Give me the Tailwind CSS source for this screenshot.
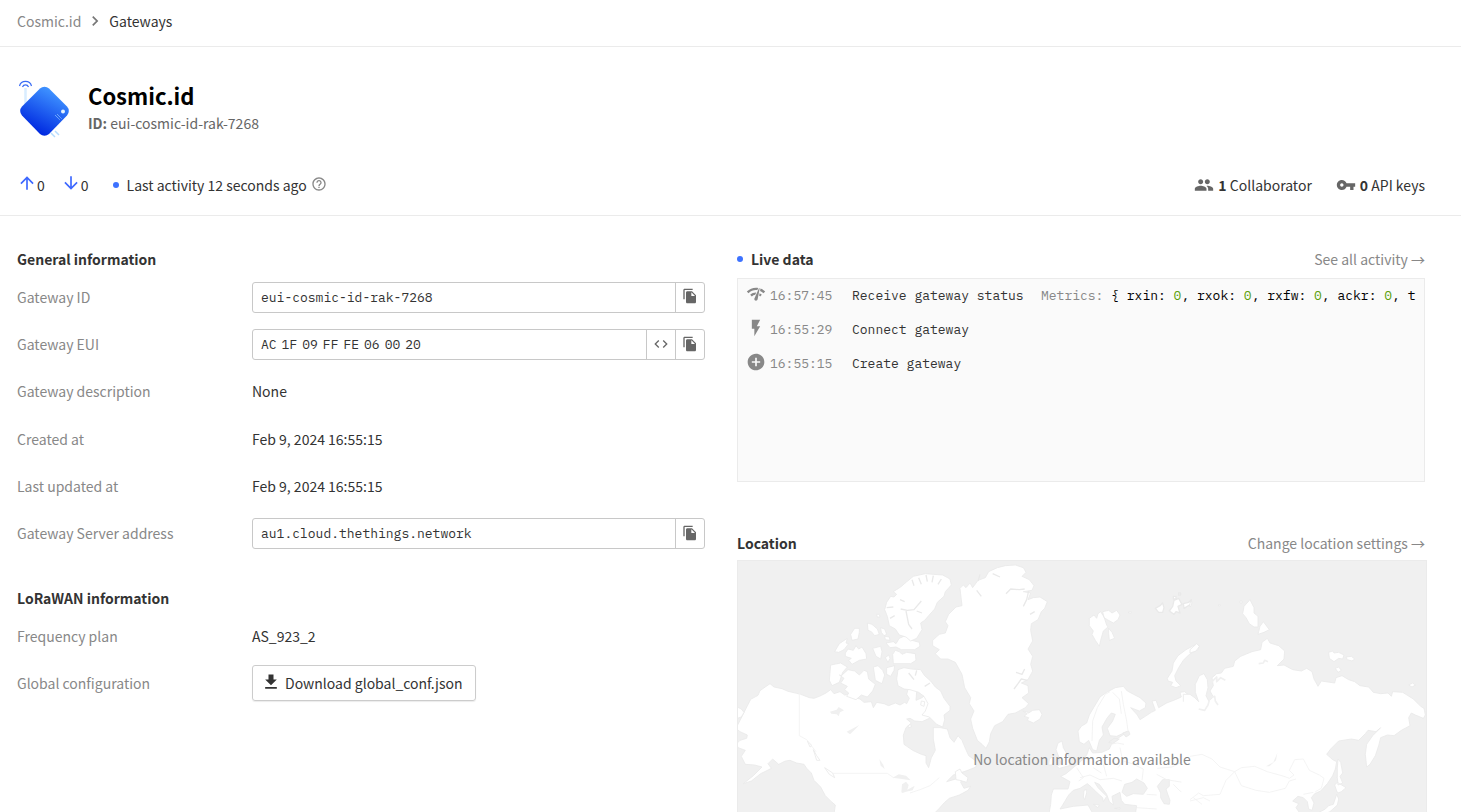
<!DOCTYPE html>
<html lang="en">
<head>
<meta charset="utf-8">
<meta name="viewport" content="width=device-width, initial-scale=1">
<title>Cosmic.id - Gateways</title>
<script src="https://cdn.jsdelivr.net/npm/@tailwindcss/browser@4"></script>
</head>
<body class="min-h-screen bg-white font-['Source_Sans_Pro','Noto_Sans_CJK_SC',sans-serif] text-[14px] leading-6 text-[#333]">

<!-- Icon set -->
<svg class="hidden" aria-hidden="true">
  <symbol id="chevron" viewBox="0 0 24 24"><path d="M10 6L8.59 7.41 13.17 12l-4.58 4.59L10 18l6-6z"/></symbol>
  <symbol id="up" viewBox="0 0 24 24"><path d="M4 12l1.41 1.41L11 7.83V20h2V7.83l5.58 5.59L20 12l-8-8-8 8z"/></symbol>
  <symbol id="down" viewBox="0 0 24 24"><path d="M20 12l-1.41-1.41L13 16.17V4h-2v12.17l-5.58-5.59L4 12l8 8 8-8z"/></symbol>
  <symbol id="help" viewBox="0 0 24 24"><path d="M11 18h2v-2h-2v2zm1-16C6.48 2 2 6.48 2 12s4.48 10 10 10 10-4.48 10-10S17.52 2 12 2zm0 18c-4.41 0-8-3.59-8-8s3.59-8 8-8 8 3.59 8 8-3.59 8-8 8zm0-14c-2.21 0-4 1.79-4 4h2c0-1.1.9-2 2-2s2 .9 2 2c0 2-3 1.75-3 5h2c0-2.25 3-2.5 3-5 0-2.21-1.79-4-4-4z"/></symbol>
  <symbol id="people" viewBox="0 0 24 24"><path d="M16 11c1.66 0 2.99-1.34 2.99-3S17.66 5 16 5c-1.66 0-3 1.34-3 3s1.34 3 3 3zm-8 0c1.66 0 2.99-1.34 2.99-3S9.66 5 8 5C6.34 5 5 6.34 5 8s1.34 3 3 3zm0 2c-2.33 0-7 1.17-7 3.5V19h14v-2.5c0-2.33-4.67-3.5-7-3.5zm8 0c-.29 0-.62.02-.97.05 1.16.84 1.97 1.97 1.97 3.45V19h6v-2.5c0-2.33-4.67-3.5-7-3.5z"/></symbol>
  <symbol id="key" viewBox="0 0 24 24"><path d="M12.65 10C11.83 7.67 9.61 6 7 6c-3.31 0-6 2.69-6 6s2.69 6 6 6c2.61 0 4.83-1.67 5.65-4H17v4h4v-4h2v-4H12.65zM7 14c-1.1 0-2-.9-2-2s.9-2 2-2 2 .9 2 2-.9 2-2 2z"/></symbol>
  <symbol id="copy" viewBox="0 0 24 24"><path d="M16 1H4c-1.1 0-2 .9-2 2v14h2V3h12V1zm-1 4l6 6v10c0 1.1-.9 2-2 2H7.99C6.89 23 6 22.1 6 21l.01-14c0-1.1.89-2 1.99-2h7zm-1 7h5.5L14 6.5V12z"/></symbol>
  <symbol id="code" viewBox="0 0 24 24"><path d="M9.4 16.6L4.8 12l4.6-4.6L8 6l-6 6 6 6 1.4-1.4zm5.2 0l4.6-4.6-4.6-4.6L16 6l6 6-6 6-1.4-1.4z"/></symbol>
  <symbol id="network" viewBox="0 0 24 24"><path d="M15.9 5c-.17 0-.32.09-.41.23l-.07.15-5.18 11.65c-.16.29-.26.61-.26.96 0 1.11.9 2.01 2.01 2.01.96 0 1.77-.68 1.96-1.59l.01-.03L16.4 5.5c0-.28-.22-.5-.5-.5zM1 9l2 2c2.88-2.88 6.79-4.08 10.53-3.62l1.19-2.68C9.89 3.84 4.74 5.27 1 9zm20 2l2-2c-1.64-1.64-3.55-2.82-5.59-3.57l-.53 2.82c1.5.62 2.9 1.53 4.12 2.75zm-4 4l2-2c-.8-.8-1.7-1.42-2.66-1.89l-.55 2.92c.42.27.83.59 1.21.97zM5 13l2 2c1.13-1.13 2.56-1.79 4.03-2l1.28-2.88c-2.63-.08-5.3.87-7.31 2.88z"/></symbol>
  <symbol id="bolt" viewBox="0 0 24 24"><path d="M7 2v11h3v9l7-12h-4l4-8z"/></symbol>
  <symbol id="add" viewBox="0 0 24 24"><path d="M12 2C6.48 2 2 6.48 2 12s4.48 10 10 10 10-4.48 10-10S17.52 2 12 2zm5 11h-4v4h-2v-4H7v-2h4V7h2v4h4v2z"/></symbol>
  <symbol id="download" viewBox="0 0 24 24"><path d="M19 9h-4V3H9v6H5l7 7 7-7zM5 18v2h14v-2H5z"/></symbol>
</svg>

<nav aria-label="Breadcrumb" class="flex h-[47px] items-center border-b border-[#ebebeb] pb-1 pl-[17px]">
  <a href="#" class="text-[#888]">Cosmic.id</a>
  <svg class="ml-1 mr-1 size-5 fill-[#777]"><use href="#chevron"/></svg>
  <a href="#" class="text-[#333]">Gateways</a>
</nav>

<header class="border-b border-[#ebebeb] pl-[17px] pr-9 pt-8">
  <div class="flex gap-[18px]">
    <svg class="h-[60px] w-[53px]" viewBox="0 0 53 60" fill="none">
      <defs><linearGradient id="gw" x1="0.2" y1="0" x2="0.8" y2="1" gradientTransform="rotate(-35 .5 .5)"><stop stop-color="#3d90ff"/><stop offset="1" stop-color="#0029e0"/></linearGradient></defs>
      <path d="M8.500 9v16" stroke="#d9edff" stroke-width="2.500"/>
      <path d="M2.500 7a6.200 6.200 0 0 1 12 0M5.500 8a3.200 3.200 0 0 1 6 0" stroke="#3a6cf5" stroke-width="1.200"/>
      <path d="M34 54l4 4M38 52l4 4" stroke="#b5dcff" stroke-width="1.500"/>
      <path d="M23 9.500a6.500 6.500 0 0 1 9 0L50 27.500a6.500 6.500 0 0 1 0 9L32 55a6.500 6.500 0 0 1-9 0L5 36.500a6.500 6.500 0 0 1 0-9z" fill="url(#gw2)"/>
      <defs><linearGradient id="gw2" x1="38" y1="14" x2="18" y2="52" gradientUnits="userSpaceOnUse"><stop stop-color="#3d90ff"/><stop offset="1" stop-color="#0029e0"/></linearGradient></defs>
      <circle cx="46" cy="32.500" r="2" fill="#e4f3ff"/>
      <path d="M38 36l5 5M40 35l5 5" stroke="#8cc4ff" stroke-width="1" stroke-dasharray="1 .6"/>
    </svg>
    <div>
      <h1 class="pt-0.5 text-[22px] font-bold leading-7 text-black">Cosmic.id</h1>
      <p class="pt-0.5 text-[#666]"><b>ID:</b> eui-cosmic-id-rak-7268</p>
    </div>
  </div>
  <div class="flex items-center justify-between pb-[18px] pt-[34px]">
    <div class="flex items-center">
      <svg class="mb-1 size-5 fill-[#3d68ff]"><use href="#up"/></svg><span>0</span>
      <svg class="mb-1 ml-4 size-5 fill-[#3d68ff]"><use href="#down"/></svg><span>0</span>
      <span class="ml-6 mr-2 size-[6px] rounded-full bg-[#3d72ff]"></span>
      <span>Last activity 12 seconds ago</span>
      <svg class="mb-0.5 ml-1 size-4 fill-[#888]"><use href="#help"/></svg>
    </div>
    <div class="flex items-center gap-6">
      <a href="#" class="flex items-center gap-1"><svg class="size-5 fill-[#666]"><use href="#people"/></svg><span><b>1</b> Collaborator</span></a>
      <a href="#" class="flex items-center gap-1"><svg class="size-5 fill-[#666]"><use href="#key"/></svg><span><b>0</b> API keys</span></a>
    </div>
  </div>
</header>

<main class="grid grid-cols-2 gap-8 pl-[17px] pr-9 pt-[31px]">
  <div>
    <section>
      <h2 class="mb-[3px] font-bold">General information</h2>
      <dl>
        <div class="flex h-[47px] items-center">
          <dt class="w-[235px] shrink-0 pb-0.5 text-[#888]">Gateway ID</dt>
          <dd class="flex h-[31px] flex-1 rounded-[3px] border border-[#c8c8c8]">
            <span class="flex flex-1 items-center pl-2 font-['IBM_Plex_Mono','Liberation_Mono',monospace] text-[13px]">eui-cosmic-id-rak-7268</span>
            <button aria-label="Copy" class="flex w-[29px] justify-center border-l border-[#c8c8c8] pt-[5px]"><svg class="size-4 fill-[#666]"><use href="#copy"/></svg></button>
          </dd>
        </div>
        <div class="flex h-[47px] items-center">
          <dt class="w-[235px] shrink-0 pb-0.5 text-[#888]">Gateway EUI</dt>
          <dd class="flex h-[31px] flex-1 rounded-[3px] border border-[#c8c8c8]">
            <span class="flex flex-1 items-center gap-[5px] pl-2 font-['IBM_Plex_Mono','Liberation_Mono',monospace] text-[13px]"><span>AC</span> <span>1F</span> <span>09</span> <span>FF</span> <span>FE</span> <span>06</span> <span>00</span> <span>20</span></span>
            <button aria-label="Toggle format" class="flex w-[29px] justify-center border-l border-[#c8c8c8] pt-[6px]"><svg class="size-4 fill-[#666]"><use href="#code"/></svg></button>
            <button aria-label="Copy" class="flex w-[29px] justify-center border-l border-[#c8c8c8] pt-[6px]"><svg class="size-4 fill-[#666]"><use href="#copy"/></svg></button>
          </dd>
        </div>
        <div class="flex h-12 items-center pb-0.5"><dt class="w-[235px] text-[#888]">Gateway description</dt><dd>None</dd></div>
        <div class="flex h-[47px] items-center pb-0.5"><dt class="w-[235px] text-[#888]">Created at</dt><dd>Feb 9, 2024 16:55:15</dd></div>
        <div class="flex h-[47px] items-center pb-0.5"><dt class="w-[235px] text-[#888]">Last updated at</dt><dd>Feb 9, 2024 16:55:15</dd></div>
        <div class="flex h-[47px] items-center">
          <dt class="w-[235px] shrink-0 pb-0.5 text-[#888]">Gateway Server address</dt>
          <dd class="flex h-[31px] flex-1 rounded-[3px] border border-[#c8c8c8]">
            <span class="flex flex-1 items-center pl-2 font-['IBM_Plex_Mono','Liberation_Mono',monospace] text-[13px]">au1.cloud.thethings.network</span>
            <button aria-label="Copy" class="flex w-[29px] justify-center border-l border-[#c8c8c8] pt-[6px]"><svg class="size-4 fill-[#666]"><use href="#copy"/></svg></button>
          </dd>
        </div>
      </dl>
    </section>
    <section class="mt-[29px]">
      <h2 class="mb-[3px] font-bold">LoRaWAN information</h2>
      <dl>
        <div class="flex h-[47px] items-center pb-0.5"><dt class="w-[235px] text-[#888]">Frequency plan</dt><dd>AS_923_2</dd></div>
        <div class="flex h-[47px] items-center pb-0.5"><dt class="w-[235px] text-[#888]">Global configuration</dt>
          <dd><button class="flex h-9 items-center gap-1 rounded-[3px] border border-[#ccc] pl-2 pr-3 shadow-[0_1px_1px_rgba(0,0,0,0.08)]"><svg class="mb-0.5 size-5 fill-[#333]"><use href="#download"/></svg>Download global_conf.json</button></dd>
        </div>
      </dl>
    </section>
  </div>

  <div class="min-w-0">
    <section>
      <div class="flex items-center justify-between">
        <h2 class="flex items-center gap-2 font-bold"><span class="size-[6px] rounded-full bg-[#3d72ff]"></span>Live data</h2>
        <a href="#" class="text-[#888]">See all activity →</a>
      </div>
      <ol class="mt-[7px] h-[204px] overflow-hidden border border-[#ebebeb] bg-[#fafafa] pl-2 font-['IBM_Plex_Mono','Liberation_Mono',monospace] text-[13px]">
        <li class="flex h-[34px] items-center whitespace-pre">
          <svg class="mb-1 mr-1 size-5 shrink-0 fill-[#888]"><use href="#network"/></svg>
          <time class="w-[82px] shrink-0 text-[#888]">16:57:45</time>
          <span class="w-[189px] shrink-0">Receive gateway status</span>
          <span class="text-black"><span class="text-[#888]">Metrics:</span> { rxin: <span class="text-[#5ba00b]">0</span>, rxok: <span class="text-[#5ba00b]">0</span>, rxfw: <span class="text-[#5ba00b]">0</span>, ackr: <span class="text-[#5ba00b]">0</span>, t</span>
        </li>
        <li class="flex h-[34px] items-center">
          <svg class="mb-1 mr-1 size-5 shrink-0 fill-[#888]"><use href="#bolt"/></svg>
          <time class="w-[82px] shrink-0 text-[#888]">16:55:29</time>
          <span>Connect gateway</span>
        </li>
        <li class="flex h-[34px] items-center">
          <svg class="mb-1 mr-1 size-5 shrink-0 fill-[#888]"><use href="#add"/></svg>
          <time class="w-[82px] shrink-0 text-[#888]">16:55:15</time>
          <span>Create gateway</span>
        </li>
      </ol>
    </section>

    <section class="mt-[49px]">
      <div class="flex items-center justify-between">
        <h2 class="font-bold">Location</h2>
        <a href="#" class="text-[#888]">Change location settings →</a>
      </div>
      <div class="-mr-0.5 mt-[5px] grid h-[396px] place-items-center overflow-hidden border border-[#ebebeb] bg-[#f0f0f0]">
        <svg class="col-start-1 row-start-1 h-[396px] w-full" viewBox="0 0 2070 1188" preserveAspectRatio="xMidYMin slice" fill="#fff" stroke="#e9e9e9" stroke-width="2.500" stroke-linejoin="round" aria-hidden="true">
          <!-- North America and the Arctic archipelago -->
          <g transform="translate(-21 -90)">
            <path d="M62 505l22-12 6-14 30-21 12 10 24 5 18 8 26 6 12 3 26 10 14 2 16-6 20-10 14-10 10 12 18-6 14 10 14-2 14 10 18 4 12 10 22-2 6 18 10-16 22 4 14 6 20-8 14 6 14-8 6 4 8-16-8-12 6-22 10-22 12 12 2 24-2 26 18-8 18-14 14 22-8 20 14 14-16 20-22 10-22-2-14-8-10 2 14 12-16 14-8 22 2 28 26 18 26 12 14 4 0 22 8 14 8-30 12-22-6-34 0-34 22 0 20 4 8 26 12 14 12-20 12 14 10 24 10 22 22 16 0 18-30 12-38 12-20 20 34-10 14-2-6 14 10 18 20-6-8 12-26 14-30 10-14 12-18 20 -12 12 -6 30-14 28-6 44h-240l-22-30-10-32-4-36 4-28-12-10-18-18-14-26-20-20-8-22-14-14-8-12-22-4-20-8-14 2-20 10-18-16-14 14 10 14-32 16-28 22-24 8 30-24 26-26-22-6-28-2-12-24 12-18-22-8-4-12 10-10 20-6 2-10-22-10-12-10z"/>
            <path d="M302 402l30-6 20 12-14 16-10 30-22 10-8-16zM334 434l20-18 20 4 14 12 14-14 10 4 4 22 20 16-8 20-16 18-18-6-16 14-28-10 6-10-12-10 8-10-20-10 10-14-14-10zM314 362l14-24 24-16-4 14 8 2-14 18-16 8zM346 366l8-12 16 4 8-14 8 10 10-6 12 20 2 16-22 4-22 12-10-12 8-6-18-6zM362 310l12-18 14 0 0 12-4 20-18 4zM412 276l14 4 16 14 6 16-14 4-10-12-10-4zM452 290l12 4 6 16-8 4-8-10zM428 352l24-6 4 16-4 22-14-8zM430 408l14-4 14 14 6 14-8 26-20-10zM466 380l10-8 4 10-6 12zM470 410l24-6-2 14-10 18-12-6zM464 316l14 2 2 10-14-2zM488 370l8-12 12 4 8 8 14-6 26 4 2 20-16 10-52 0zM508 322l18-8 20 14 22 6 2 12-16 10-40 0-16-8-18 2-12-14 22-4 8 6z"/>
            <path d="M490 182l22-14 16-14 22-18 36-8 24 2 28 2 22 12 4 18-18 20-4 14-20 18-8 20-18 20-12 14-12 8 4 20-16 26-18 8-14-12-20-6-12-18-18-10-6-28-8-20 6-22 12-18 10 2 8-8z"/>
            <path d="M504 416l18-6 22 4 28 2 12 18 18 16 14 18 16 12 10 22 18 24 0 12-18 14 2 14-6 22-18-8-22-22-22-6 10-12 8-22-12-22-16-12-26-8-18-2-18-10-4-20z"/>
            <path d="M22 528l12 6 8 10-8 14-12 4zM574 510l10 2-2 14-10-4zM534 584l8-4 2 8-8 2zM676 722l14-8 6 12 18 14-4 14-20-6-12-2zM440 250l8 0 2 8-8 0zM232 630l14 14-6 4zM250 656l10 18 10 14-10 0zM284 710l24 16 6 14-16-10z"/>
            <path d="M512 234l20 4 20-2 22-26M528 240l8 40 10 14M510 206l14 6M560 240l16 6M546 146l6 18M566 140l8 20M588 132l4 20M610 134l-4 20M634 144l-10 16M470 230l20-2M480 262l14-8M536 426l16 20M560 418l-4 16M600 456l-16 10" fill="none" stroke-width="4"/>
            <path d="M300 542l20-6 6-8 16 10-12 6-4 12-6-6-16-2zM350 602l20-10 18-10-14 14-14 14zM448 684l12 18 4 12-12-10zM488 740l18-10 22 4 14 14-26-4zM514 784l2-24 12-8 8 10-4 14 22-12-6 14-20 4-10 4z" fill="#f0f0f0" stroke="none"/>
            <path d="M208 486v128l22 12 28 36M308 727h164l20 14M540 786l30-10 30-12 28-24" fill="none" stroke="#f2f2f2"/>
          </g>
          <!-- Greenland, Scandinavia and Europe -->
          <g transform="translate(669 -90)">
            <path d="M0 172l10-10 8 8 12-14 8 14 16-22 22-8 10-18 26-12 24-6 30-2 24 8 8 14-12 12 22 10 14 18-6 14-26 4 22 4-8 20 16-6 20-2 22 14-8 20-10 10-10 24-20 12-2 20 6 32-14 24 14 22-6 24 6 20-14 26-20 10 20 8 2 22-20 14 20 18-10 12-30 16-22 4-16 22-24 12-12 24-4 24-10 20-12-12-14-12-14-36-6-28 10-24-14-22 4-18-18-30-8-40-20-36-22-10-22 0-16-16 12-12-20-12 0-16 20-18 18-4 8-22-8-12 10-22 22-22 18-4z"/>
            <path d="M138 188l14-14 26 2 16-2M190 226l10-20 6-26M162 474l12-16 10-14 18 4M168 424l18 6 8-16M60 130l-6 20M98 128l22 10M50 178l14 18M210 250l14-8" fill="none" stroke-width="4"/>
            <path d="M188 540l12 2 6 4 12-8 20-2 8 14-6 14-20 12-18-8 4-8-14-4 10-8z"/>
            <path d="M388 262l14-10 8 10 4-14 8-6 10 16 8 24 4 6-14 12-8 28-4 18-12-18-10-18 4-10-12-16zM428 242l18-4 10 8 14-8 10 14-6 14-14 10-18-10-10-6zM446 292l10 12 8 18-16 6-2-20zM504 244l10-2-2 6z"/>
            <path d="M586 232l14-8 8-8 4 14-4 14-12 0zM628 240l10-14 4-18 14-6 10 18-12 6 6 20-12-4-6 8zM670 218l16-4 8-8-2 14-20 12zM656 186l6 0 0 6-6 0zM640 196l8 0 0 8-8 0z" stroke-width="4"/>
            <path d="M622 442l14-22 4-24 14-22 24-18 30-16 10 4-4 12-26 14-18 18-14 22-12 24 4 16 14 14-14 6-16-6 6-10-14-4z"/>
            <path d="M354 600L364 586 380 576 388 552 402 528 420 498 440 484 466 470 490 466 502 480 540 500 558 516 556 530 538 540 512 530 532 552 540 566 556 556 574 544 586 538 576 510 588 508 596 530 620 516 646 506 664 498 660 484 674 482 690 496 720 520 760 540 760 1250 300 1250 240 1000 272 820 274 792 280 774 324 774 330 752 302 736 318 728 342 708 364 690 380 672 388 650 398 666 426 664 448 654 456 636 476 620 492 610 500 602 470 616 450 614 442 592 458 570 466 550 454 546 442 560 426 588 430 612 418 628 410 660 398 656 386 628 372 640 358 632z"/>
            <path d="M288 656l6-20 12-6 4 20 10 18 12 16-4 20-30 8-8-6 14-8-6-16zM268 684l12-8 4 12-8 14-10 0z"/>
            <!-- Mediterranean -->
            <path d="M326 792L340 778 360 772 382 758 394 768 412 786 428 800 430 812 440 796 414 770 404 754 418 760 440 790 448 812 460 822 456 796 480 784 484 808 494 820 530 824 526 850 400 850 384 822 340 826 300 834 308 822z" fill="#f0f0f0"/>
            <path d="M372 778l8-2 0 10-6 20-4-8zM400 820l18 2-4 8zM464 832l16-2 0 4z"/>
            <path d="M486 784L494 760 516 754 530 744 552 756 562 772 550 790 520 788 500 796zM592 766L608 746 628 746 628 766 618 774 624 792 630 808 628 820 612 818 602 800 602 786zM488 606l18-6 4 10-12 8zM446 634l16-12 16 2-20 14z" fill="#f0f0f0"/>
            <path d="M396 630l2-60 14-40 24-40 14-8M458 484l20 20 6 44M484 480l6 40 10 50 4 30M450 640l22-4 20 4M480 650l8 40-14 20M350 710l20 30-14 10M360 740l30-8 30 14 40-4 26 8M400 710l24 16M430 700l10 36M490 690l26 8 34 16-4 34M592 712l44-4 40-20 40-16M590 730l30 16 60 10 40 40M640 760l20 20 30 14M560 790l30 2M530 830l60 4" fill="none" stroke="#f0f0f0"/>
          </g>
          <!-- Russia, Siberia and East Asia -->
          <g transform="translate(1359 -90)">
            <path d="M158 248l4-22 18-20 12 24 0 16 12 10 0 32-12 0-14-10-10-18zM204 310l6-24 10-14 18 24-16 8zM416 364l12-4 4 6 14-2 16 8-4 12-12-2-14 10-14-10zM468 378l16-2 10 8-8 6-14-4zM436 412l10-4 8 10-10 6zM656 462l12-6 8 6-10 6zM0 214l6-2-2 12-4 4zM0 356l20-18 8 8-10 14-18 6z"/>
            <path d="M-20 490L0 490 14 500 26 512 16 484 16 460 28 434 42 428 52 446 54 470 48 494 56 510 70 498 60 480 70 464 66 440 80 428 94 426 104 412 130 406 134 390 152 376 186 362 212 356 216 334 232 322 240 336 266 344 284 360 282 384 262 404 282 402 308 416 334 420 350 412 366 422 372 444 384 466 394 450 434 456 438 440 456 434 476 446 494 452 510 464 536 468 550 484 572 488 594 486 604 496 608 482 638 484 670 504 692 526 702 532 706 552 700 562 676 552 664 546 656 560 660 584 634 598 612 614 592 612 572 620 566 644 556 674 540 700 530 708 526 670 530 640 548 614 572 590 558 602 534 598 526 608 506 628 484 624 446 630 422 654 410 670 428 686 440 692 436 714 428 734 412 758 392 780 374 788 364 800 372 816 366 838 356 834 352 812 340 800 324 796 308 810 326 818 318 830 332 850 320 960 260 1180 -20 1180z"/>
            <path d="M444 684l8 10 6 32-8 10 8 20-14 6-2-22 0-28zM440 780l-6-18 8-8 26 16-14 12-10 4zM440 790l6 14-4 18-22 20-34 14-6-8 26-14 10-10 14-4zM84 222l8 0-4 4zM150 210l6 0 0 6-6 0z"/>
            <path d="M-26 512h14v680h-14z" stroke="none"/>
            <path d="M26 534l18 4 10-16 6-22 14-4 2 14 8 12M66 452l14-14 0 14 12-12 14 8M206 398l14-2 4-8 10 4" fill="none" stroke="#f0f0f0" stroke-width="5"/>
            <path d="M228 706l22-12 12-28-4 22-20 18z" fill="#f0f0f0" stroke="none"/>
            <path d="M0 676l36-6 30 14 24 24 44 14 20-12 40-4 38 16 50 14 16 6 14-10-14-14 16-32 26-2 18 34 30 14 14 10-8 30-18 10M134 722l-26 26-18 42-50 4-14-8-26 20M134 722l20 42 44 14 40 6 48-12 12-22 20-6M0 810l40-10 20 10M10 800l26 20M340 790l30-6" fill="none" stroke="#f2f2f2"/>
          </g>
        </svg>
        <p class="col-start-1 row-start-1 text-[#888]">No location information available</p>
      </div>
    </section>
  </div>
</main>
</body>
</html>
